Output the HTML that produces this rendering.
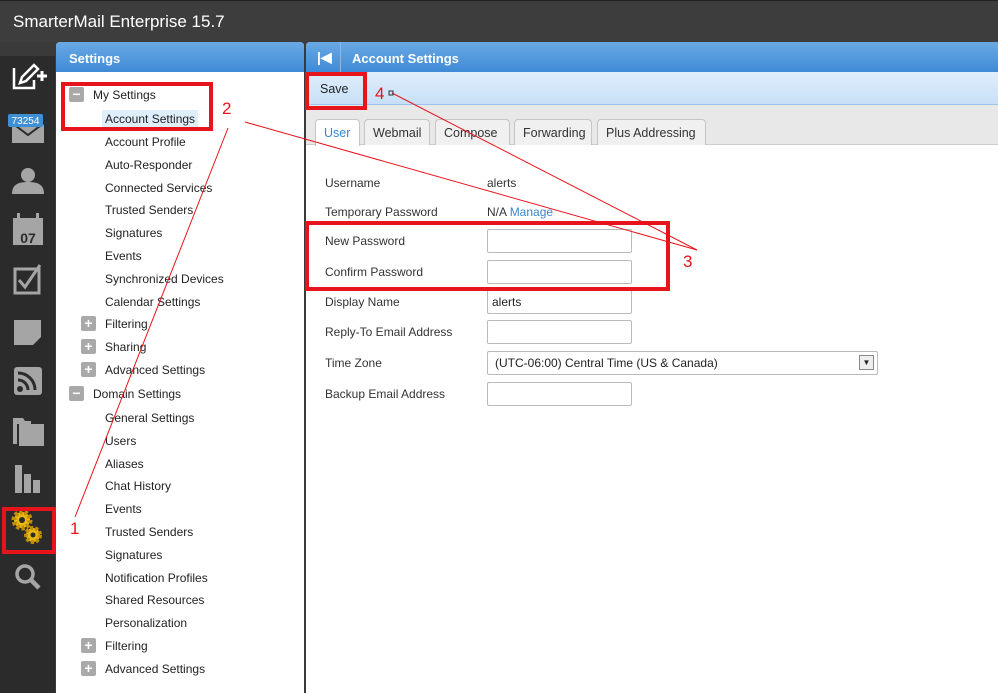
<!DOCTYPE html>
<html><head><meta charset="utf-8"><style>
*{margin:0;padding:0;box-sizing:border-box}
body{width:998px;height:693px;overflow:hidden;background:#3a3a3a;font-family:"Liberation Sans",Arial,sans-serif;position:relative;font-size:12px;color:#222}
.top{position:absolute;left:0;top:0;width:998px;height:42px;background:#3d3d3d;border-top:1px solid #222}
.top span{position:absolute;left:13px;top:11px;color:#fff;font-size:17px}
.side{position:absolute;left:0;top:56px;width:55px;height:637px;background:#2b2b2b}
.ic{position:absolute;left:10px;width:36px;height:34px}
.lp{position:absolute;left:56px;top:42px;width:248px;height:651px;background:#fff;border-radius:4px 4px 0 0;overflow:hidden}
.hd{height:30px;background:linear-gradient(#6aa9e4,#3f8ad6);color:#fff;font-weight:bold;font-size:13px;padding:9px 0 0 13px}
.rp{position:absolute;left:306px;top:42px;width:692px;height:651px;background:#fff;border-radius:4px 0 0 0;overflow:hidden}
.it{position:absolute;font-size:12px;color:#222;white-space:nowrap}
.bx{position:absolute;width:15px;height:15px;background:#a9a9a9;border-radius:2px;color:#fff;font-weight:bold;font-size:14px;line-height:14px;text-align:center}
.tb{position:absolute;left:0;top:30px;width:692px;height:33px;background:linear-gradient(#e0eefb,#c7e0f7);border-bottom:1px solid #9cc4ea}
.tabs{position:absolute;left:0;top:63px;width:692px;height:40px;background:#e8e8e8;border-bottom:1px solid #ccc}
.tab{position:absolute;top:14px;height:26px;border:1px solid #c5c5c5;border-bottom:none;border-radius:4px 4px 0 0;background:#f0f0f0;font-size:12.5px;color:#333;padding:6px 8px 0}
.lb{position:absolute;left:19px;font-size:12px;color:#333}
.in{position:absolute;left:181px;width:145px;height:24px;border:1px solid #bbb;border-radius:2px;background:#fff;font-size:12px;padding:4px 4px}
.red{position:absolute;border:4px solid #e8141c}
.n{position:absolute;color:#e8141c;font-size:17px}
</style></head><body>
<div class="top"><span>SmarterMail Enterprise 15.7</span></div>
<div class="side">
<svg width="55" height="637" style="position:absolute;left:0;top:0">
<g fill="none" stroke="#fff" stroke-width="2.5"><path d="M14 12v20h20V24"/><path d="M20 27l2-6 12-12 4 4-12 12z" fill="none"/></g>
<path d="M42 15v10M37 20h10" stroke="#fff" stroke-width="3"/>
<rect x="12" y="67" width="32" height="20" fill="#a5a5a5"/><path d="M12 67l16 12 16-12" stroke="#2b2b2b" stroke-width="2" fill="none"/>
<rect x="8" y="58" width="35" height="13" rx="2" fill="#3d8fd6"/><text x="25.5" y="68" font-size="10" fill="#fff" text-anchor="middle" font-family="Liberation Sans">73254</text>
<circle cx="28" cy="119" r="7" fill="#a5a5a5"/><path d="M12 138c0-10 7-12 16-12s16 2 16 12z" fill="#a5a5a5"/>
<rect x="13" y="162" width="30" height="27" fill="#a5a5a5"/><rect x="17" y="157" width="3" height="8" fill="#a5a5a5"/><rect x="36" y="157" width="3" height="8" fill="#a5a5a5"/>
<text x="28" y="187" font-size="14" font-weight="bold" fill="#2b2b2b" text-anchor="middle" font-family="Liberation Sans">07</text>
<rect x="15" y="213" width="24" height="24" fill="none" stroke="#a5a5a5" stroke-width="3"/><path d="M19 224l6 7 15-22" stroke="#a5a5a5" stroke-width="3" fill="none"/>
<path d="M14 264h27v17l-8 8H14z" fill="#a5a5a5"/>
<rect x="14" y="311" width="28" height="28" rx="3" fill="#a5a5a5"/><circle cx="20" cy="333" r="3" fill="#2b2b2b"/><path d="M18 324a10 10 0 0 1 10 10M18 317a17 17 0 0 1 17 17" stroke="#2b2b2b" stroke-width="3" fill="none"/>
<path d="M13 362h10l2 3h6v3H17v20h-4z" fill="#a5a5a5"/><rect x="19" y="368" width="25" height="22" fill="#a5a5a5"/>
<rect x="15" y="409" width="7" height="28" fill="#a5a5a5"/><rect x="24" y="418" width="7" height="19" fill="#a5a5a5"/><rect x="33" y="424" width="7" height="13" fill="#a5a5a5"/>
<circle cx="22" cy="464" r="8" fill="#e8b90e" stroke="#c28e00" stroke-width="5" stroke-dasharray="3 2"/><circle cx="22" cy="464" r="3" fill="#2b2b2b"/>
<circle cx="33" cy="479" r="7" fill="#e8b90e" stroke="#c28e00" stroke-width="4" stroke-dasharray="3 2"/><circle cx="33" cy="479" r="2.5" fill="#2b2b2b"/>
<circle cx="25" cy="518" r="8" stroke="#a5a5a5" stroke-width="3.5" fill="none"/><path d="M31 524l8 8" stroke="#a5a5a5" stroke-width="4.5"/>
</svg></div>
<div class="lp"><div class="hd">Settings</div>
<div class="bx" style="left:13px;top:45px">−</div><div class="it" style="left:37px;top:46px">My Settings</div>
<div class="it" style="left:46px;top:68px;background:#dfeefb;padding:2px 3px">Account Settings</div>
<div class="it" style="left:49px;top:93px">Account Profile</div>
<div class="it" style="left:49px;top:116px">Auto-Responder</div>
<div class="it" style="left:49px;top:139px">Connected Services</div>
<div class="it" style="left:49px;top:161px">Trusted Senders</div>
<div class="it" style="left:49px;top:184px">Signatures</div>
<div class="it" style="left:49px;top:207px">Events</div>
<div class="it" style="left:49px;top:230px">Synchronized Devices</div>
<div class="it" style="left:49px;top:253px">Calendar Settings</div>
<div class="bx" style="left:25px;top:274px">+</div><div class="it" style="left:49px;top:275px">Filtering</div>
<div class="bx" style="left:25px;top:297px">+</div><div class="it" style="left:49px;top:298px">Sharing</div>
<div class="bx" style="left:25px;top:320px">+</div><div class="it" style="left:49px;top:321px">Advanced Settings</div>
<div class="bx" style="left:13px;top:344px">−</div><div class="it" style="left:37px;top:345px">Domain Settings</div>
<div class="it" style="left:49px;top:369px">General Settings</div>
<div class="it" style="left:49px;top:392px">Users</div>
<div class="it" style="left:49px;top:415px">Aliases</div>
<div class="it" style="left:49px;top:437px">Chat History</div>
<div class="it" style="left:49px;top:460px">Events</div>
<div class="it" style="left:49px;top:483px">Trusted Senders</div>
<div class="it" style="left:49px;top:506px">Signatures</div>
<div class="it" style="left:49px;top:529px">Notification Profiles</div>
<div class="it" style="left:49px;top:551px">Shared Resources</div>
<div class="it" style="left:49px;top:574px">Personalization</div>
<div class="bx" style="left:25px;top:596px">+</div><div class="it" style="left:49px;top:597px">Filtering</div>
<div class="bx" style="left:25px;top:619px">+</div><div class="it" style="left:49px;top:620px">Advanced Settings</div>
</div>
<div class="rp"><div class="hd" style="padding-left:46px">Account Settings</div>
<div style="position:absolute;left:0;top:0;width:35px;height:30px;border-right:1px solid #8bb8e6;color:#fff;font-size:14px;font-weight:bold;padding:7px 0 0 11px">|&#9664;</div>
<div class="tb"><div style="position:absolute;left:0;top:0;width:58px;height:33px;border-right:1px solid #9cc4ea;font-size:12.5px;padding:10px 0 0 14px">Save</div></div>
<div class="tabs">
<div class="tab" style="left:9px;width:45px;background:#fff;color:#3a86cf;height:27px">User</div>
<div class="tab" style="left:58px;width:66px">Webmail</div>
<div class="tab" style="left:129px;width:75px">Compose</div>
<div class="tab" style="left:208px;width:78px">Forwarding</div>
<div class="tab" style="left:291px;width:109px">Plus Addressing</div>
</div>
<div class="lb" style="top:134px">Username</div><div class="lb" style="left:181px;top:134px">alerts</div>
<div class="lb" style="top:163px">Temporary Password</div><div class="lb" style="left:181px;top:163px">N/A <span style="color:#3a86cf">Manage</span></div>
<div class="lb" style="top:192px">New Password</div><div class="in" style="top:187px;width:145px"></div>
<div class="lb" style="top:223px">Confirm Password</div><div class="in" style="top:218px"></div>
<div class="lb" style="top:253px">Display Name</div><div class="in" style="top:248px">alerts</div>
<div class="lb" style="top:283px">Reply-To Email Address</div><div class="in" style="top:278px"></div>
<div class="lb" style="top:314px">Time Zone</div><div class="in" style="top:309px;width:391px;padding-left:7px">(UTC-06:00) Central Time (US &amp; Canada)<div style="position:absolute;right:3px;top:3px;width:15px;height:15px;border:1px solid #888;background:#eee;font-size:8px;text-align:center;line-height:14px">&#9660;</div></div>
<div class="lb" style="top:345px">Backup Email Address</div><div class="in" style="top:340px"></div>
</div>
<div class="red" style="left:61px;top:82px;width:152px;height:49px"></div>
<div class="red" style="left:305px;top:72px;width:62px;height:38px"></div>
<div class="red" style="left:305px;top:221px;width:365px;height:70px"></div>
<div class="red" style="left:2px;top:507px;width:54px;height:47px"></div>
<div class="n" style="left:222px;top:99px">2</div>
<div class="n" style="left:375px;top:84px">4</div>
<div class="n" style="left:683px;top:252px">3</div>
<div class="n" style="left:70px;top:519px">1</div>
<svg width="998" height="693" style="position:absolute;left:0;top:0" fill="none" stroke="#e8141c" stroke-width="1">
<path d="M75 517L228 128"/><path d="M245 122L697 250"/><path d="M392 93L697 250"/>
<rect x="389" y="91" width="4" height="4" stroke="#333"/>
</svg>
</body></html>
